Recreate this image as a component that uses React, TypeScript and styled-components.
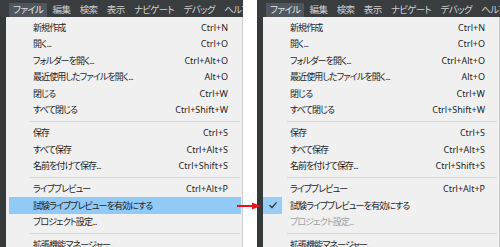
import React from 'react';
import styled, { createGlobalStyle } from 'styled-components';

const GlobalStyle = createGlobalStyle`
  html, body {
    margin: 0;
    padding: 0;
    background: #fff;
  }
  body {
    font-family: "Noto Sans", "Noto Sans CJK JP", sans-serif;
    font-feature-settings: "palt";
  }
`;

type Entry = { label: string; keys?: string; id?: string } | 'sep';

const titles = ['ファイル', '編集', '検索', '表示', 'ナビゲート', 'デバッグ', 'ヘルプ'];

const entries: Entry[] = [
    { label: '新規作成', keys: 'Ctrl+N' },
    { label: '開く...', keys: 'Ctrl+O' },
    { label: 'フォルダーを開く...', keys: 'Ctrl+Alt+O' },
    { label: '最近使用したファイルを開く...', keys: 'Alt+O' },
    { label: '閉じる', keys: 'Ctrl+W' },
    { label: 'すべて閉じる', keys: 'Ctrl+Shift+W' },
    'sep',
    { label: '保存', keys: 'Ctrl+S' },
    { label: 'すべて保存', keys: 'Ctrl+Alt+S' },
    { label: '名前を付けて保存...', keys: 'Ctrl+Shift+S' },
    'sep',
    { label: 'ライブプレビュー', keys: 'Ctrl+Alt+P' },
    { label: '試験ライブプレビューを有効にする', id: 'exp' },
    { label: 'プロジェクト設定...', id: 'proj' },
    'sep',
    { label: '拡張機能マネージャー...' },
];

const MenuPanel: React.FC<{ after?: boolean }> = ({ after }) => (
    <Panel>
        <MenuBar>
            {titles.map((t, i) => (
                <MenuTitle key={t} $open={i === 0}>{t}</MenuTitle>
            ))}
        </MenuBar>
        <Body>
            <Strip />
            <Dropdown>
                {entries.map((e, i) => {
                    if (e === 'sep') return <Separator key={i} />;
                    const active = !after && e.id === 'exp';
                    const checked = after && e.id === 'exp';
                    const disabled = after && e.id === 'proj';
                    return (
                        <Item key={i} $active={active} $disabled={disabled}>
                            <Gutter>
                                {checked && (
                                    <CheckBox>
                                        <svg width="10" height="8" viewBox="0 0 10 8">
                                            <path d="M1.5 4.2 L4 6.5 L8.6 1.4" fill="none" stroke="#333" strokeWidth="1.3" />
                                        </svg>
                                    </CheckBox>
                                )}
                            </Gutter>
                            <Label>{e.label}</Label>
                            <Keys>{e.keys}</Keys>
                        </Item>
                    );
                })}
            </Dropdown>
        </Body>
    </Panel>
);

const App: React.FC = () => (
    <>
        <GlobalStyle />
        <Stage>
            <MenuPanel />
            <MenuPanel after />
            <Arrow width="26" height="12" viewBox="0 0 26 12">
                <line x1="0" y1="6" x2="17" y2="6" stroke="#e8141b" strokeWidth="2" />
                <polygon points="15,2.5 24,6 15,9.5" fill="#e8141b" />
            </Arrow>
        </Stage>
    </>
);

// Styled Components

const Stage = styled.div`
  position: relative;
  display: flex;
  gap: 14px;
  width: 500px;
  height: 247px;
  overflow: hidden;
  background: #fff;
`;

const Panel = styled.div`
  width: 243px;
  height: 247px;
  display: flex;
  flex-direction: column;
`;

const MenuBar = styled.div`
  height: 17px;
  background: #3a3d3f;
  display: flex;
  align-items: flex-end;
  padding-left: 9px;
  gap: 1.5px;
  overflow: hidden;
  white-space: nowrap;
`;

const MenuTitle = styled.div<{ $open?: boolean }>`
  height: 14px;
  line-height: 14px;
  padding: 0 4px;
  font-size: 9.5px;
  letter-spacing: -0.7px;
  color: ${(p) => (p.$open ? '#e4e4e4' : '#cfcfcf')};
  background: ${(p) => (p.$open ? '#50565e' : 'transparent')};
`;

const Body = styled.div`
  flex: 1;
  display: flex;
  min-height: 0;
`;

const Strip = styled.div`
  width: 6px;
  background: #34393a;
`;

const Dropdown = styled.div`
  flex: 1;
  background: #f0f0f0;
  border-right: 1px solid #cdcdcd;
  padding-top: 2px;
  overflow: hidden;
`;

const Item = styled.div<{ $active?: boolean; $disabled?: boolean }>`
  height: 16.5px;
  margin: 0 1px 0 3px;
  display: flex;
  align-items: center;
  font-size: 9px;
  white-space: nowrap;
  color: ${(p) => (p.$disabled ? '#a0a0a0' : '#1e1e1e')};
  background: ${(p) => (p.$active ? '#91c9f7' : 'transparent')};
`;

const Gutter = styled.div`
  width: 24px;
  height: 100%;
  flex: none;
`;

const CheckBox = styled.div`
  width: 19px;
  height: 100%;
  margin-left: -3px;
  background: #99cdf5;
  display: flex;
  align-items: center;
  justify-content: center;
`;

const Label = styled.span`
  flex: 1;
  letter-spacing: -0.9px;
`;

const Keys = styled.span`
  padding-right: 13px;
`;

const Separator = styled.div`
  height: 6.5px;
  display: flex;
  align-items: center;
  padding: 0 2px 0 24px;

  &::after {
    content: '';
    flex: 1;
    height: 1px;
    background: #d5d5d5;
  }
`;

const Arrow = styled.svg`
  position: absolute;
  left: 237px;
  top: 200px;
`;

export default App;
